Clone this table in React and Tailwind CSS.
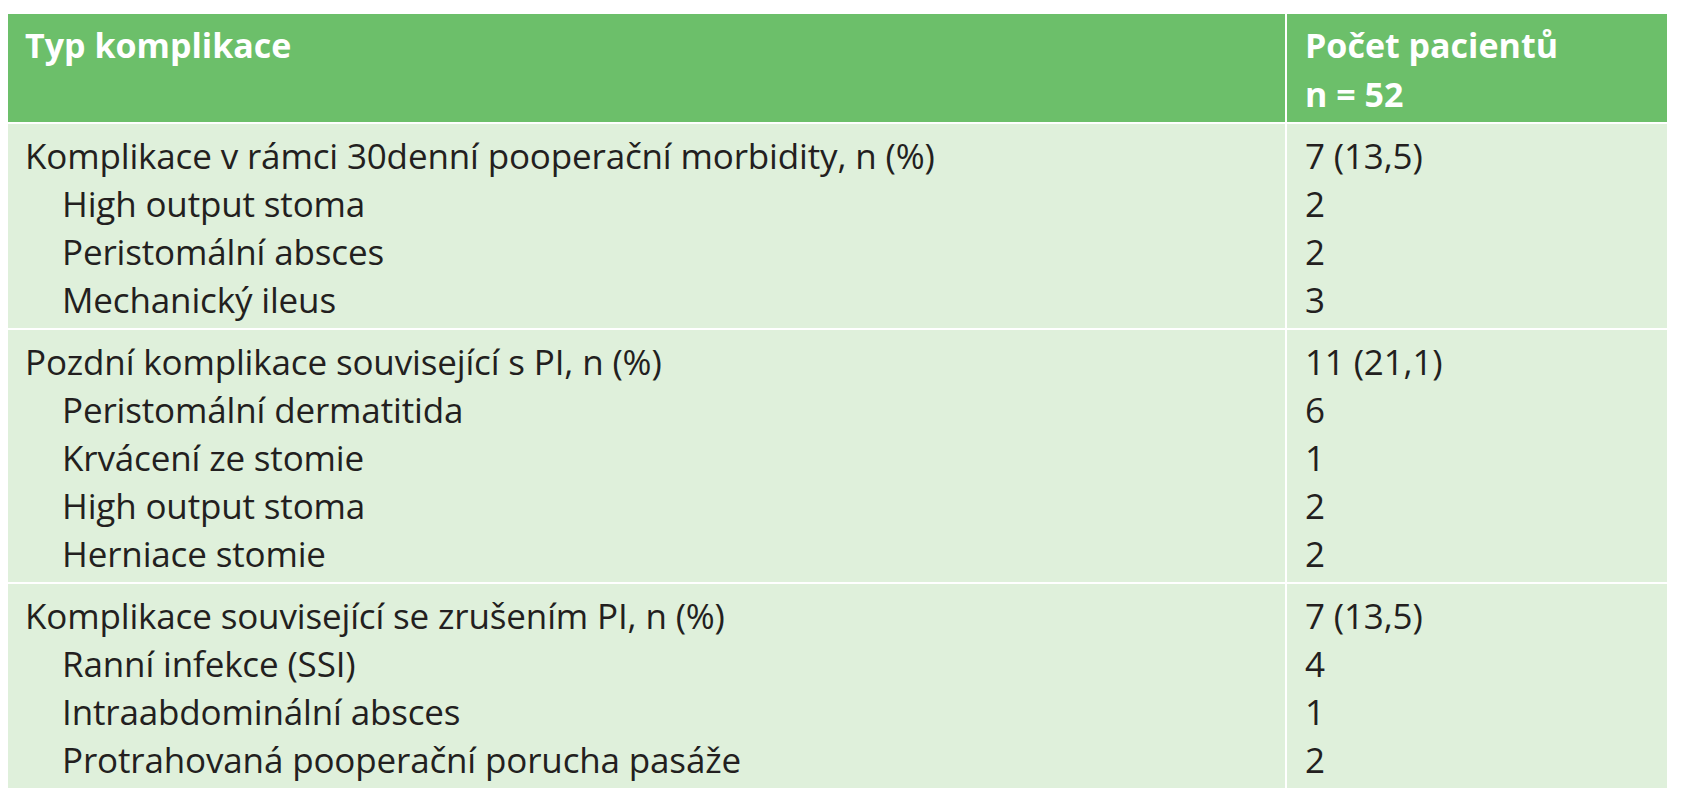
import React from "react";

const groups = [
  {
    title: "Komplikace v rámci 30denní pooperační morbidity, n (%)",
    total: "7 (13,5)",
    items: [
      ["High output stoma", "2"],
      ["Peristomální absces", "2"],
      ["Mechanický ileus", "3"],
    ],
  },
  {
    title: "Pozdní komplikace související s PI, n (%)",
    total: "11 (21,1)",
    items: [
      ["Peristomální dermatitida", "6"],
      ["Krvácení ze stomie", "1"],
      ["High output stoma", "2"],
      ["Herniace stomie", "2"],
    ],
  },
  {
    title: "Komplikace související se zrušením PI, n (%)",
    total: "7 (13,5)",
    items: [
      ["Ranní infekce (SSI)", "4"],
      ["Intraabdominální absces", "1"],
      ["Protrahovaná pooperační porucha pasáže", "2"],
    ],
  },
];

const App = () => {
  return (
    <div className="min-h-screen bg-white pt-[14px] pl-[8px] font-['Open_Sans',sans-serif] text-[#231f20]">
      <div className="w-[1659px] flex flex-col gap-[2px]">
        <div className="flex gap-[2px] h-[108px] text-white font-bold text-[34px] leading-[49px]">
          <div className="w-[1277px] bg-[#6cbf6a] pl-[17px] pt-[7px]">Typ komplikace</div>
          <div className="flex-1 bg-[#6cbf6a] pl-[18px] pt-[7px]">
            <p>Počet pacientů</p>
            <p>n = 52</p>
          </div>
        </div>
        {groups.map((group, i) => (
          <div key={i} className="flex gap-[2px] text-[35px] leading-[48px] tracking-[-0.15px]">
            <div className="w-[1277px] bg-[#dff0db] pl-[17px] pt-[8px] pb-[4px]">
              <p>{group.title}</p>
              {group.items.map((item, j) => (
                <p key={j} className="pl-[37px]">
                  {item[0]}
                </p>
              ))}
            </div>
            <div className="flex-1 bg-[#dff0db] pl-[18px] pt-[8px] pb-[4px]">
              <p>{group.total}</p>
              {group.items.map((item, j) => (
                <p key={j}>{item[1]}</p>
              ))}
            </div>
          </div>
        ))}
      </div>
    </div>
  );
};

export default App;
